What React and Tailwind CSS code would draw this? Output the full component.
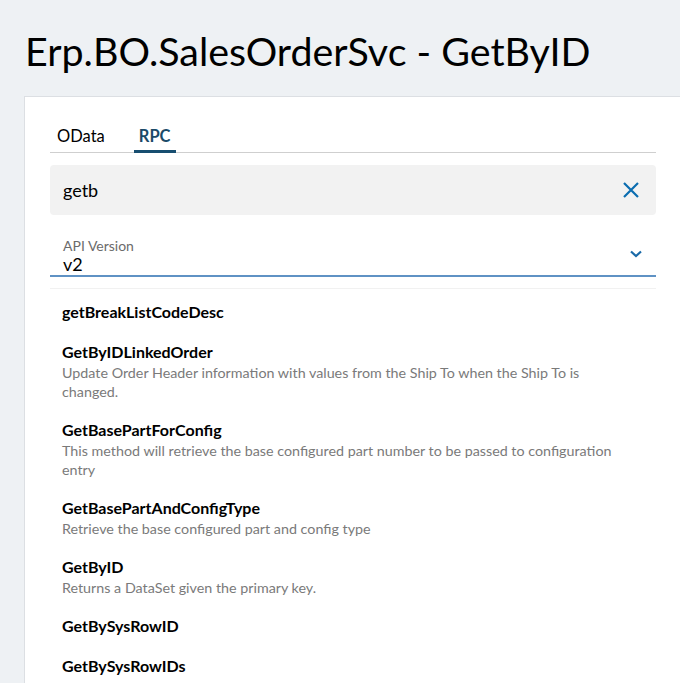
import React, { useState } from "react";

const METHODS = [
    { name: "getBreakListCodeDesc", desc: [] },
    {
        name: "GetByIDLinkedOrder",
        desc: ["Update Order Header information with values from the Ship To when the Ship To is", "changed."],
    },
    {
        name: "GetBasePartForConfig",
        desc: ["This method will retrieve the base configured part number to be passed to configuration", "entry"],
    },
    { name: "GetBasePartAndConfigType", desc: ["Retrieve the base configured part and config type"] },
    { name: "GetByID", desc: ["Returns a DataSet given the primary key."] },
    { name: "GetBySysRowID", desc: [] },
    { name: "GetBySysRowIDs", desc: [] },
];

function Tabs({ active, onChange }) {
    const tabs = ["OData", "RPC"];
    return (
        <div className="flex gap-[22px] border-b border-[#cfcfcf]">
            {tabs.map((tab) => (
                <button
                    key={tab}
                    onClick={() => onChange(tab)}
                    className={
                        tab === active
                            ? "-mb-px px-[5px] pt-[4px] pb-[2px] text-[16.5px] leading-[24px] font-bold text-[#1b4a68] border-b-[3px] border-[#174e70]"
                            : "-mb-px px-[7px] pt-[4px] pb-[2px] text-[16.5px] leading-[24px] text-black border-b-[3px] border-transparent"
                    }
                >
                    {tab}
                </button>
            ))}
        </div>
    );
}

function MethodItem({ method }) {
    return (
        <li className="px-[12px] py-[9px]">
            <p className="text-[16px] leading-[22px] font-bold text-black">{method.name}</p>
            {method.desc.map((line, i) => (
                <p key={i} className="text-[14.3px] leading-[19px] text-[#7a7a7a] whitespace-nowrap">
                    {line}
                </p>
            ))}
        </li>
    );
}

export default function App() {
    const [tab, setTab] = useState("RPC");
    const [query, setQuery] = useState("getb");

    return (
        <div
            className="h-[683px] w-[680px] overflow-hidden bg-[#eef1f4]"
            style={{ fontFamily: "Lato, 'Noto Sans', sans-serif" }}
        >
            <h1 className="pl-[25px] pt-[26px] pb-[20px] text-[39.4px] leading-[50px] text-black">
                Erp.BO.SalesOrderSvc - GetByID
            </h1>
            <div className="ml-[24px] w-[658px] bg-white border border-[#dcdfe3] px-[25px] pt-[23px]">
                <Tabs active={tab} onChange={setTab} />

                {/* search */}
                <div className="mt-[12px] h-[50px] flex items-center justify-between rounded-[4px] bg-[#f2f2f2] pl-[13px] pr-[16px]">
                    <input
                        value={query}
                        onChange={(e) => setQuery(e.target.value)}
                        className="bg-transparent outline-none text-[18px] text-black w-full"
                    />
                    <button onClick={() => setQuery("")} className="text-[#0b6db0]">
                        <svg width="18" height="18" viewBox="0 0 18 18" fill="none" stroke="currentColor" strokeWidth="2.2">
                            <path d="M2 2 L16 16 M16 2 L2 16" />
                        </svg>
                    </button>
                </div>

                {/* api version */}
                <div className="mt-[10px] pt-[12px] pl-[13px] pr-[14px] flex items-center justify-between border-b-2 border-[#5f92c4]">
                    <div>
                        <p className="text-[14px] leading-[17px] text-[#6b6b6b]">API Version</p>
                        <p className="text-[18px] leading-[21px] text-black">v2</p>
                    </div>
                    <svg width="12" height="8" viewBox="0 0 12 8" fill="none" stroke="#1a6aa8" strokeWidth="2.2" className="-mt-[4px]">
                        <path d="M1 1.5 L6 6 L11 1.5" />
                    </svg>
                </div>

                <ul className="mt-[11px] pt-[3px] border-t border-[#f1f1f1]">
                    {METHODS.map((m) => (
                        <MethodItem key={m.name} method={m} />
                    ))}
                </ul>
            </div>
        </div>
    );
}
